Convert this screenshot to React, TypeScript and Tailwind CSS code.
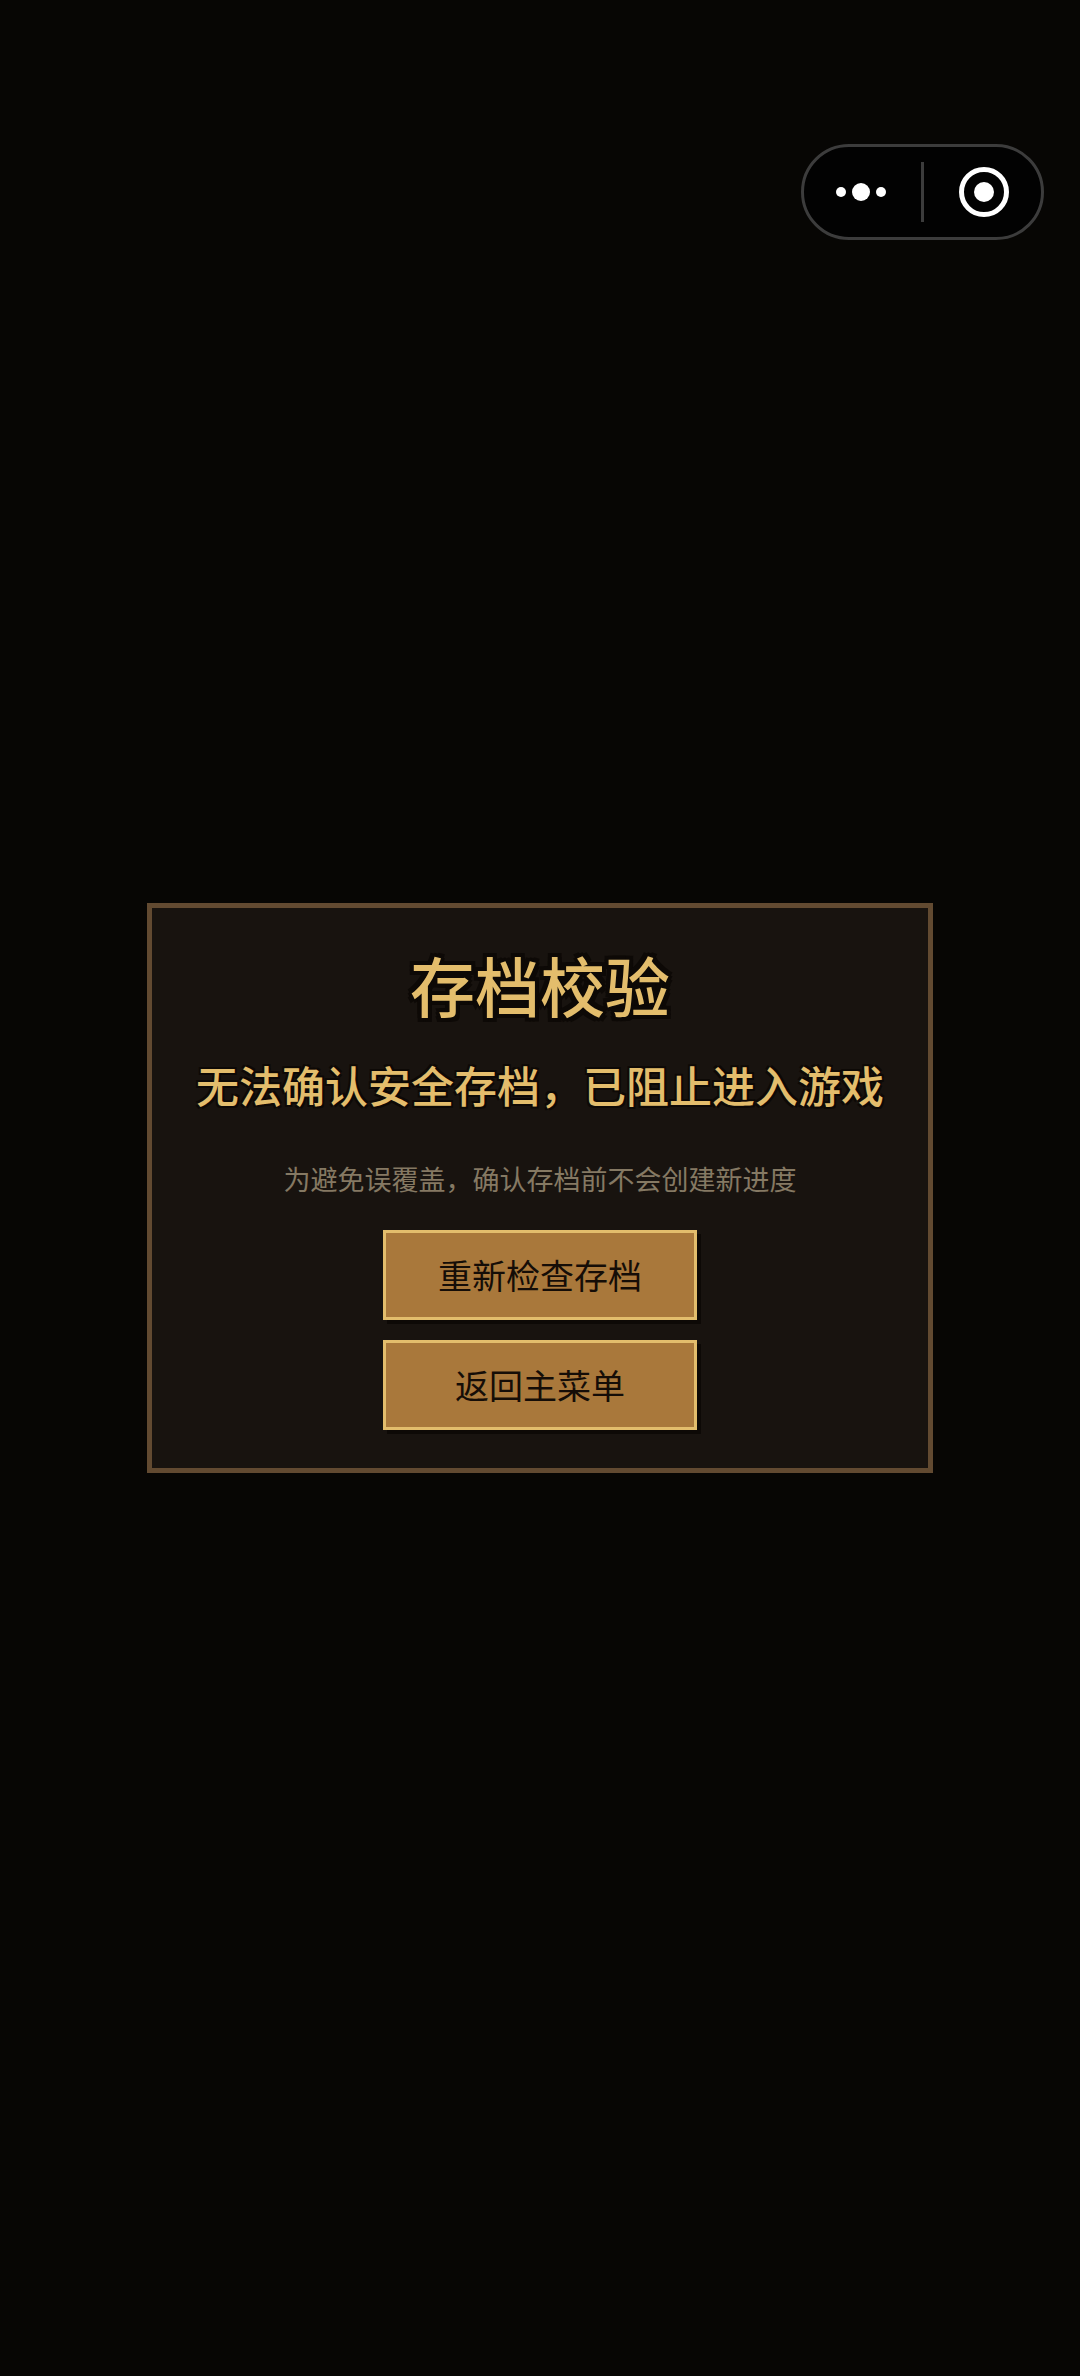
import { useState } from 'react'

const buttonClass =
  'h-[90px] w-[314px] border-[3px] border-[#e3bd6c] bg-[#a9783b] text-[34px] leading-[48px] text-[#150d07] shadow-[4px_4px_0_0_#0d0906]'

function Capsule() {
  return (
    <div className="flex h-24 w-[243px] items-center rounded-full border-[3px] border-[#3c3c3c] bg-[#020202]">
      <button type="button" aria-label="更多" className="flex h-full flex-1 items-center justify-center gap-[6px] pr-[3px]">
        <span className="size-[10px] rounded-full bg-white" />
        <span className="size-[18px] rounded-full bg-white" />
        <span className="size-[10px] rounded-full bg-white" />
      </button>
      <span className="h-[60px] w-[3px] bg-[#3c3c3c]" />
      <button type="button" aria-label="关闭" className="flex h-full flex-1 items-center justify-center pl-[3px]">
        <svg viewBox="0 0 50 50" className="size-[50px]">
          <circle cx="25" cy="25" r="22.5" fill="none" stroke="#fff" strokeWidth="5" />
          <circle cx="25" cy="25" r="10" fill="#fff" />
        </svg>
      </button>
    </div>
  )
}

export default function App() {
  const [checking, setChecking] = useState(false)

  return (
    <div className="relative flex min-h-screen items-center justify-center bg-[#070604] font-['Noto_Sans_CJK_SC',sans-serif]">
      {/* Host app menu floats over the game */}
      <div className="absolute top-36 right-9">
        <Capsule />
      </div>

      <main className="flex flex-col items-center border-[5px] border-[#624a31] bg-[#18130f] px-11 pt-9 pb-[38px] text-center">
        <h1 className="text-[65px] leading-[80px] font-medium text-[#e3bd6c] [text-shadow:-4px_-4px_0_#0d0906,4px_-4px_0_#0d0906,-4px_4px_0_#0d0906,4px_4px_0_#0d0906,0_4px_0_#0d0906,0_-4px_0_#0d0906,4px_0_0_#0d0906,-4px_0_0_#0d0906]">
          存档校验
        </h1>
        <p className="mt-7 text-[43px] leading-[64px] font-medium text-[#e3bd6c] [text-shadow:2px_2px_0_#0d0906,-2px_-2px_0_#0d0906,2px_-2px_0_#0d0906,-2px_2px_0_#0d0906]">
          无法确认安全存档，已阻止进入游戏
        </p>
        <p className="mt-11 text-[27px] leading-[38px] text-[#857963]">为避免误覆盖，确认存档前不会创建新进度</p>
        <div className="mt-8 flex flex-col gap-5">
          <button type="button" disabled={checking} onClick={() => setChecking(true)} className={buttonClass}>
            重新检查存档
          </button>
          <button type="button" onClick={() => setChecking(false)} className={buttonClass}>
            返回主菜单
          </button>
        </div>
      </main>
    </div>
  )
}
